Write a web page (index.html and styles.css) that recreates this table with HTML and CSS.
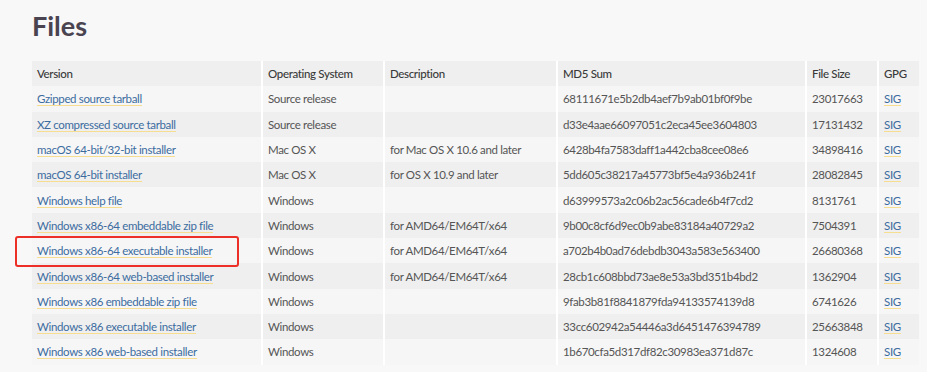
FILE: index.html
```html
<!DOCTYPE html>
<html>
<head>
    <title>Files</title>
    <link rel="stylesheet" href="styles.css">
</head>
<body>
    <div class="page">
        <h1 class="title">Files</h1>
        <table class="files">
            <colgroup>
                <col class="c-version">
                <col class="c-os">
                <col class="c-desc">
                <col class="c-md5">
                <col class="c-size">
                <col class="c-gpg">
            </colgroup>
            <thead>
                <tr>
                    <th>Version</th>
                    <th>Operating System</th>
                    <th>Description</th>
                    <th>MD5 Sum</th>
                    <th>File Size</th>
                    <th>GPG</th>
                </tr>
            </thead>
            <tbody>
                <tr>
                    <td><a href="#">Gzipped source tarball</a></td>
                    <td>Source release</td>
                    <td></td>
                    <td>68111671e5b2db4aef7b9ab01bf0f9be</td>
                    <td>23017663</td>
                    <td><a href="#">SIG</a></td>
                </tr>
                <tr>
                    <td><a href="#">XZ compressed source tarball</a></td>
                    <td>Source release</td>
                    <td></td>
                    <td>d33e4aae66097051c2eca45ee3604803</td>
                    <td>17131432</td>
                    <td><a href="#">SIG</a></td>
                </tr>
                <tr>
                    <td><a href="#">macOS 64-bit/32-bit installer</a></td>
                    <td>Mac OS X</td>
                    <td>for Mac OS X 10.6 and later</td>
                    <td>6428b4fa7583daff1a442cba8cee08e6</td>
                    <td>34898416</td>
                    <td><a href="#">SIG</a></td>
                </tr>
                <tr>
                    <td><a href="#">macOS 64-bit installer</a></td>
                    <td>Mac OS X</td>
                    <td>for OS X 10.9 and later</td>
                    <td>5dd605c38217a45773bf5e4a936b241f</td>
                    <td>28082845</td>
                    <td><a href="#">SIG</a></td>
                </tr>
                <tr>
                    <td><a href="#">Windows help file</a></td>
                    <td>Windows</td>
                    <td></td>
                    <td>d63999573a2c06b2ac56cade6b4f7cd2</td>
                    <td>8131761</td>
                    <td><a href="#">SIG</a></td>
                </tr>
                <tr>
                    <td><a href="#">Windows x86-64 embeddable zip file</a></td>
                    <td>Windows</td>
                    <td>for AMD64/EM64T/x64</td>
                    <td>9b00c8cf6d9ec0b9abe83184a40729a2</td>
                    <td>7504391</td>
                    <td><a href="#">SIG</a></td>
                </tr>
                <tr>
                    <td class="marked"><a href="#">Windows x86-64 executable installer</a><span class="highlight"></span></td>
                    <td>Windows</td>
                    <td>for AMD64/EM64T/x64</td>
                    <td>a702b4b0ad76debdb3043a583e563400</td>
                    <td>26680368</td>
                    <td><a href="#">SIG</a></td>
                </tr>
                <tr>
                    <td><a href="#">Windows x86-64 web-based installer</a></td>
                    <td>Windows</td>
                    <td>for AMD64/EM64T/x64</td>
                    <td>28cb1c608bbd73ae8e53a3bd351b4bd2</td>
                    <td>1362904</td>
                    <td><a href="#">SIG</a></td>
                </tr>
                <tr>
                    <td><a href="#">Windows x86 embeddable zip file</a></td>
                    <td>Windows</td>
                    <td></td>
                    <td>9fab3b81f8841879fda94133574139d8</td>
                    <td>6741626</td>
                    <td><a href="#">SIG</a></td>
                </tr>
                <tr>
                    <td><a href="#">Windows x86 executable installer</a></td>
                    <td>Windows</td>
                    <td></td>
                    <td>33cc602942a54446a3d6451476394789</td>
                    <td>25663848</td>
                    <td><a href="#">SIG</a></td>
                </tr>
                <tr>
                    <td><a href="#">Windows x86 web-based installer</a></td>
                    <td>Windows</td>
                    <td></td>
                    <td>1b670cfa5d317df82c30983ea371d87c</td>
                    <td>1324608</td>
                    <td><a href="#">SIG</a></td>
                </tr>
            </tbody>
        </table>
    </div>
</body>
</html>
```

FILE: styles.css
```css
body {
    margin: 0;
    background-color: #f8f8f8;
    font-family: Lato, "Open Sans", sans-serif;
    color: #555555;
}

.page {
    padding: 8px 0 0 32px;
}

.title {
    margin: 0 0 18px 0;
    font-size: 27px;
    line-height: 35px;
    font-weight: 700;
    color: #4a4451;
}

.files {
    border-collapse: collapse;
    table-layout: fixed;
    width: 887px;
    font-size: 11.5px;
    letter-spacing: -0.35px;
}

.c-version { width: 230px; }
.c-os { width: 122px; }
.c-desc { width: 173px; }
.c-md5 { width: 249px; }
.c-size { width: 72px; }
.c-gpg { width: 41px; }

.files th,
.files td {
    height: 25.3px;
    padding: 0 5px;
    text-align: left;
    white-space: nowrap;
    border-right: 2px solid #ffffff;
}

.files th:last-child,
.files td:last-child {
    border-right: none;
}

.files th {
    font-weight: 500;
    color: #3a3a3a;
    background-color: #efefef;
}

.files tbody tr:nth-child(odd) td {
    background-color: #f6f6f6;
}

.files tbody tr:nth-child(even) td {
    background-color: #efefef;
}

.files a {
    color: #3c6c9f;
    text-decoration: none;
    border-bottom: 1px solid #f7dd8f;
}

.marked {
    position: relative;
}

.highlight {
    position: absolute;
    left: -17px;
    top: -2px;
    width: 220px;
    height: 27px;
    border: 2px solid #ec2f27;
    border-radius: 3px;
}
```
